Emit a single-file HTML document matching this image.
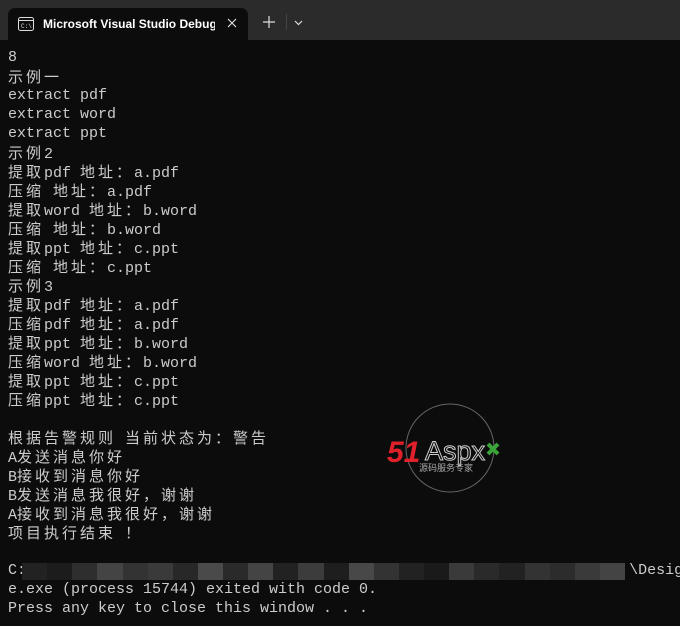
<!DOCTYPE html>
<html><head><meta charset="utf-8"><style>
*{margin:0;padding:0}
body{width:680px;height:626px;background:#0c0c0c;overflow:hidden;position:relative;font-family:"Liberation Sans",sans-serif}
.top{position:absolute;left:0;top:0;width:680px;height:40px;background:#2b2b2b}
.tab{position:absolute;left:8px;top:8px;width:240px;height:32px;background:#0c0c0c;border-radius:7px 7px 0 0}
.tab .t{position:absolute;left:35px;top:9px;color:#fff;font-size:12px;font-weight:bold;white-space:nowrap;width:172px;overflow:hidden}
.c{position:absolute;left:8px;top:48px;font-family:"Liberation Mono",monospace;font-size:15px;color:#cccccc}
.c div{height:19px;line-height:19px;white-space:pre;overflow:visible}
i{font-style:normal;letter-spacing:3px;line-height:19px;font-family:"Noto Sans CJK SC",sans-serif;font-size:15px}
.blur{position:absolute;top:563px;height:17px;left:22px;width:603px;display:flex}
.blur div{flex:1}
</style></head><body>
<div class="top">
<div class="tab">
<svg style="position:absolute;left:10px;top:9px" width="16" height="14" viewBox="0 0 16 14"><rect x="0.5" y="0.5" width="15" height="13" rx="2" fill="none" stroke="#ddd"/><line x1="0.5" y1="3.5" x2="15.5" y2="3.5" stroke="#ddd"/><text x="3" y="11" font-size="6" fill="#ddd" font-family="Liberation Mono">C:\</text></svg>
<div class="t">Microsoft Visual Studio Debug</div>
<svg style="position:absolute;left:219px;top:10px" width="10" height="10"><path d="M1 1L9 9M9 1L1 9" stroke="#ddd" stroke-width="1.2"/></svg>
</div>
<svg style="position:absolute;left:263px;top:16px" width="12" height="12"><path d="M6 0V12M0 6H12" stroke="#ddd" stroke-width="1.2"/></svg>
<div style="position:absolute;left:286px;top:14px;width:1px;height:16px;background:#444"></div>
<svg style="position:absolute;left:294px;top:20px" width="9" height="6"><path d="M1 1L4.5 4.5L8 1" stroke="#ddd" fill="none" stroke-width="1.2"/></svg>
</div>
<div class="c">
<div>8</div>
<div><i>示例一</i></div>
<div>extract pdf</div>
<div>extract word</div>
<div>extract ppt</div>
<div><i>示例</i>2</div>
<div><i>提取</i>pdf <i>地址：</i>a.pdf</div>
<div><i>压缩</i> <i>地址：</i>a.pdf</div>
<div><i>提取</i>word <i>地址：</i>b.word</div>
<div><i>压缩</i> <i>地址：</i>b.word</div>
<div><i>提取</i>ppt <i>地址：</i>c.ppt</div>
<div><i>压缩</i> <i>地址：</i>c.ppt</div>
<div><i>示例</i>3</div>
<div><i>提取</i>pdf <i>地址：</i>a.pdf</div>
<div><i>压缩</i>pdf <i>地址：</i>a.pdf</div>
<div><i>提取</i>ppt <i>地址：</i>b.word</div>
<div><i>压缩</i>word <i>地址：</i>b.word</div>
<div><i>提取</i>ppt <i>地址：</i>c.ppt</div>
<div><i>压缩</i>ppt <i>地址：</i>c.ppt</div>
<div> </div>
<div><i>根据告警规则</i> <i>当前状态为：警告</i></div>
<div>A<i>发送消息你好</i></div>
<div>B<i>接收到消息你好</i></div>
<div>B<i>发送消息我很好，谢谢</i></div>
<div>A<i>接收到消息我很好，谢谢</i></div>
<div><i>项目执行结束</i> <i>！</i></div>
<div> </div>
<div>C:                                                                   \Design</div>
<div>e.exe (process 15744) exited with code 0.</div>
<div>Press any key to close this window . . .</div>
</div>
<div class="blur">
<div style="background:#222"></div><div style="background:#1c1c1c"></div><div style="background:#2e2e2e"></div><div style="background:#444"></div><div style="background:#333"></div><div style="background:#3a3a3a"></div><div style="background:#282828"></div><div style="background:#4a4a4a"></div><div style="background:#2a2a2a"></div><div style="background:#444"></div><div style="background:#222"></div><div style="background:#3c3c3c"></div><div style="background:#1e1e1e"></div><div style="background:#484848"></div><div style="background:#333"></div><div style="background:#222"></div><div style="background:#1a1a1a"></div><div style="background:#3a3a3a"></div><div style="background:#2a2a2a"></div><div style="background:#222"></div><div style="background:#333"></div><div style="background:#2c2c2c"></div><div style="background:#3a3a3a"></div><div style="background:#444"></div>
</div>
<svg style="position:absolute;left:385px;top:402px" width="130" height="95">
<circle cx="65" cy="46" r="44" fill="none" stroke="#666" stroke-width="1"/>
<text x="2" y="60" font-family="Liberation Sans" font-weight="bold" font-style="italic" font-size="30" fill="#e0202a">51</text>
<text x="40" y="58" font-family="Liberation Sans" font-size="27" fill="none" stroke="#ccc" stroke-width="1">Aspx</text>
<path d="M103 42L113 52M113 42L103 52" stroke="#3aa33a" stroke-width="4"/>
<text x="34" y="69" font-family="Noto Sans CJK SC" font-size="9" fill="#aaa">源码服务专家</text>
</svg>
</body></html>
